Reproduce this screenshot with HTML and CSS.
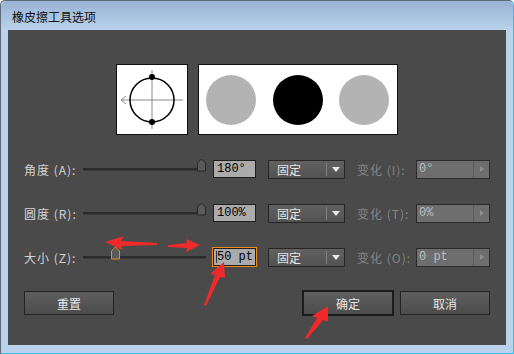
FILE: index.html
```html
<!DOCTYPE html>
<html lang="zh-CN">
<head>
    <meta charset="UTF-8">
    <title>橡皮擦工具选项</title>
    <link rel="stylesheet" href="styles.css">
</head>
<body>

<div class="window">
    <div class="titlebar">橡皮擦工具选项</div>

    <div class="panel">
        <!-- brush preview -->
        <div class="preview">
            <div class="preview-box small">
                <svg width="72" height="71" viewBox="0 0 72 71">
                    <line x1="36" y1="6" x2="36" y2="65" stroke="#8a8a8a" stroke-width="1"/>
                    <line x1="6" y1="36" x2="67" y2="36" stroke="#8a8a8a" stroke-width="1"/>
                    <polyline points="10,32 5,36 10,40" fill="none" stroke="#8a8a8a" stroke-width="1"/>
                    <circle cx="36" cy="36" r="22" fill="none" stroke="#000" stroke-width="1.5"/>
                    <circle cx="36" cy="13" r="3" fill="#000"/>
                    <circle cx="36" cy="58" r="3" fill="#000"/>
                </svg>
            </div>
            <div class="preview-box big">
                <svg width="200" height="71" viewBox="0 0 200 71">
                    <circle cx="33" cy="36" r="25" fill="#b3b3b3"/>
                    <circle cx="100" cy="36" r="25" fill="#000"/>
                    <circle cx="166" cy="36" r="25" fill="#b3b3b3"/>
                </svg>
            </div>
        </div>

        <!-- option rows -->
        <div class="row">
            <span class="label">角度 (A):</span>
            <div class="track">
                <svg class="thumb" style="left: 113px" width="11" height="14" viewBox="0 0 11 14"><polygon points="1.5,13 1.5,5 5.5,1 9.5,5 9.5,13" fill="#5a5a5a" stroke="#262626"/></svg>
            </div>
            <div class="value">180°</div>
            <div class="select"><span class="select-text">固定</span><span class="select-arrow"></span></div>
            <span class="label dim">变化 (I):</span>
            <div class="value off"><span>0°</span><span class="spin"></span></div>
        </div>

        <div class="row">
            <span class="label">圆度 (R):</span>
            <div class="track">
                <svg class="thumb" style="left: 113px" width="11" height="14" viewBox="0 0 11 14"><polygon points="1.5,13 1.5,5 5.5,1 9.5,5 9.5,13" fill="#5a5a5a" stroke="#262626"/></svg>
            </div>
            <div class="value">100%</div>
            <div class="select"><span class="select-text">固定</span><span class="select-arrow"></span></div>
            <span class="label dim">变化 (T):</span>
            <div class="value off"><span>0%</span><span class="spin"></span></div>
        </div>

        <div class="row">
            <span class="label">大小 (Z):</span>
            <div class="track">
                <svg class="thumb" style="left: 27px" width="11" height="14" viewBox="0 0 11 14"><polygon points="1.5,13 1.5,5 5.5,1 9.5,5 9.5,13" fill="#5a5a5a" stroke="#f08a1c"/></svg>
            </div>
            <div class="value focus"><span class="caret"></span>50 pt</div>
            <div class="select"><span class="select-text">固定</span><span class="select-arrow"></span></div>
            <span class="label dim">变化 (O):</span>
            <div class="value off"><span>0 pt</span><span class="spin"></span></div>
        </div>

        <!-- buttons -->
        <div class="buttons">
            <button class="btn">重置</button>
            <span class="spacer"></span>
            <button class="btn default">确定</button>
            <button class="btn">取消</button>
        </div>
    </div>

    <!-- red annotation arrows drawn over the dialog -->
    <svg class="marks" width="514" height="354" viewBox="0 0 514 354">
        <polygon points="105,242 124,236 121,241 157,243 157,245 121,246 123,250" fill="#f02a2a"/>
        <polygon points="168,245 187,243 186,239 200,245 186,252 187,248 168,247" fill="#f02a2a"/>
        <polygon points="204,305 215,275 210,274 224,262 225,278 220,277 206,306" fill="#f02a2a"/>
        <polygon points="305,338 317,318 312,316 328,306 328,322 323,320 307,339" fill="#f02a2a"/>
    </svg>
</div>

</body>
</html>
```

FILE: styles.css
```css
body {
    margin: 0;
    font-family: "Noto Sans CJK SC", "DejaVu Sans", sans-serif;
    font-size: 12px;
}

/* --- Window frame --- */
.window {
    position: relative;
    width: 514px;
    height: 354px;
    box-sizing: border-box;
    border: 1px solid #5e6b78;
    border-right-color: #34bde8;
    border-bottom-color: #34bde8;
    border-radius: 5px 5px 0 0;
    background-color: #bad2eb;
}

.titlebar {
    height: 29px;
    line-height: 31px;
    padding-left: 11px;
    color: #111;
    background: linear-gradient(#98b3d3, #bad2eb);
    border-radius: 5px 5px 0 0;
}

.panel {
    margin-left: 7px;
    width: 498px;
    height: 315px;
    box-sizing: border-box;
    padding: 34px 16px 0 16px;
    background-color: #4a4a4a;
}

/* --- Preview --- */
.preview {
    display: flex;
    justify-content: center;
    gap: 10px;
    margin-bottom: 24px;
}

.preview-box {
    height: 71px;
    box-sizing: border-box;
    border: 1px solid #111;
    background-color: #fff;
}

.preview-box svg {
    display: block;
    margin: -1px;
}

.preview-box.small {
    width: 72px;
}

.preview-box.big {
    width: 200px;
}

/* --- Option rows --- */
.row {
    display: flex;
    align-items: center;
    height: 20px;
    margin-bottom: 24px;
}

.label {
    width: 59px;
    flex: none;
    color: #d4d4d4;
    white-space: nowrap;
    letter-spacing: 1px;
}

.label.dim {
    color: #848484;
    margin-left: 12px;
}

.track {
    position: relative;
    width: 123px;
    height: 3px;
    box-sizing: border-box;
    background-color: #2b2b2b;
    border-bottom: 1px solid #3a3a3a;
    margin-right: 7px;
}

.thumb {
    position: absolute;
    top: -10px;
}

.value {
    width: 43px;
    height: 18px;
    box-sizing: border-box;
    border: 1px solid #1e1e1e;
    background-color: #ababab;
    color: #000;
    font-family: "Liberation Mono", "DejaVu Sans Mono", monospace;
    font-size: 12px;
    line-height: 16px;
    padding-left: 3px;
    white-space: nowrap;
    overflow: hidden;
    display: flex;
    align-items: center;
}

.value.focus {
    outline: 1px solid #f08a1c;
    padding-left: 2px;
}

.caret {
    width: 1px;
    height: 12px;
    flex: none;
    background-color: #333;
}

.value.off {
    width: 74px;
    height: 19px;
    padding-left: 2px;
    background-color: #6e6e6e;
    border-color: #2a2a2a;
    color: #bdbdbd;
    justify-content: space-between;
}

.spin {
    width: 15px;
    height: 17px;
    border-left: 1px solid #5c5c5c;
    position: relative;
}

.spin::after {
    content: "";
    position: absolute;
    left: 6px;
    top: 5px;
    border-left: 4px solid #8e8e8e;
    border-top: 3px solid transparent;
    border-bottom: 3px solid transparent;
}

/* --- Dropdown --- */
.select {
    width: 77px;
    height: 19px;
    box-sizing: border-box;
    margin-left: 12px;
    border: 1px solid #262626;
    background: linear-gradient(#616161, #525252);
    display: flex;
    align-items: center;
    color: #e4e4e4;
}

.select-text {
    flex: 1;
    padding-left: 8px;
    line-height: 17px;
}

.select-arrow {
    width: 17px;
    height: 13px;
    border-left: 1px solid #808080;
    position: relative;
}

.select-arrow::after {
    content: "";
    position: absolute;
    left: 5px;
    top: 4px;
    border-top: 5px solid #e8e8e8;
    border-left: 4px solid transparent;
    border-right: 4px solid transparent;
}

/* --- Buttons --- */
.buttons {
    display: flex;
    align-items: center;
    gap: 6px;
    margin-top: -1px;
}

.spacer {
    flex: 1;
}

.btn {
    width: 90px;
    height: 24px;
    box-sizing: border-box;
    border: 1px solid #242424;
    background: linear-gradient(#5e5e5e, #4c4c4c);
    color: #e6e6e6;
    font-family: "Noto Sans CJK SC", "DejaVu Sans", sans-serif;
    font-size: 12px;
    padding: 0;
}

.btn.default {
    width: 92px;
    height: 26px;
    border: 2px solid #1c1c1c;
}

/* --- Annotation overlay --- */
.marks {
    position: absolute;
    left: -1px;
    top: -1px;
    pointer-events: none;
}
```
